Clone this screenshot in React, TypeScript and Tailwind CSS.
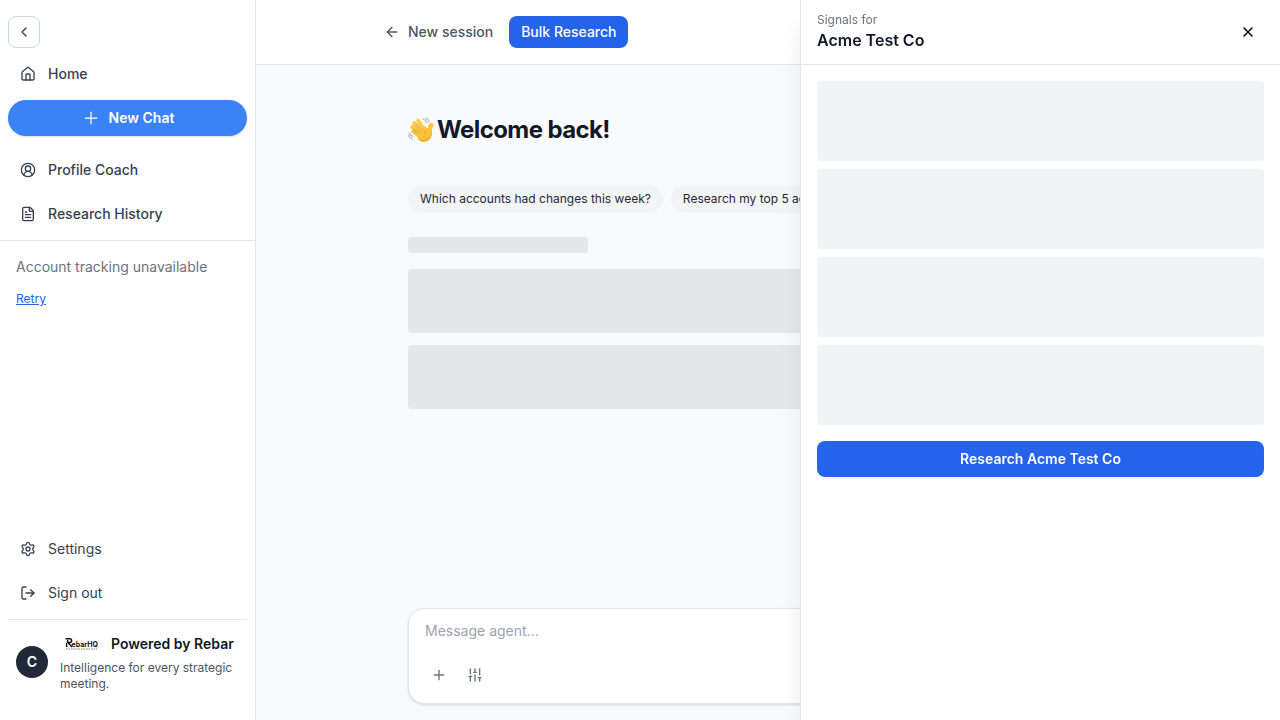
import type { ReactNode } from 'react';
import {
  ArrowLeft,
  ChevronLeft,
  CircleUserRound,
  FileText,
  House,
  LogOut,
  Plus,
  Settings,
  SlidersVertical,
  X,
} from 'lucide-react';

function WavingHand() {
  return (
    <svg viewBox="0 0 52 52" className="h-[26px] w-[26px] shrink-0" role="img" aria-label="Waving hand">
      <defs>
        <linearGradient id="skin" x1="0" y1="0" x2="1" y2="1">
          <stop offset="0" stopColor="#ffd550" />
          <stop offset="1" stopColor="#f7b32b" />
        </linearGradient>
      </defs>
      <g fill="none" stroke="#b4b6ba" strokeWidth="2.4" strokeLinecap="round">
        <path d="M30 4c4 1 6 3 7 7M35 2c4 1 6 4 7 8" />
        <path d="M3 32c1 4 3 6 7 7M1 37c2 4 4 6 8 7" />
      </g>
      <g strokeLinecap="round" fill="none">
        <path d="M26 28 12 12" strokeWidth="7" stroke="#fcc63c" />
        <path d="M32 24 20 7" strokeWidth="7" stroke="#fdca42" />
        <path d="M22 33 8 20" strokeWidth="6.5" stroke="#fbc237" />
        <path d="M22 38 10 29" strokeWidth="6" stroke="#f9bc32" />
      </g>
      <path
        d="M15 32 34 18c2 2 4 5 5 6 1-3 1-8 4-11 2-2 8-1 8 3 0 4-4 6-3 12 1 8-1 14-8 19-7 4-14 3-19-1z"
        fill="url(#skin)"
      />
      <g fill="none" stroke="#df8f1f" strokeWidth="1.3" strokeLinecap="round">
        <path d="M17 12 29 26M12 17l13 13M11 25l11 9" />
        <path d="M39 24c-4 2-6 5-5 10" />
      </g>
      <path d="M24 46c7 4 17 2 21-5" fill="none" stroke="#e69a22" strokeWidth="1.6" strokeLinecap="round" />
    </svg>
  );
}

function RebarLogo() {
  return (
    <svg viewBox="0 0 45 16" className="h-4 w-[45px] shrink-0" role="img" aria-label="RebarHQ">
      <g fill="none" stroke="#111" strokeWidth="1.4">
        <path d="M5.5 2.7h4.2c2.6 0 2.6 3.8 0 3.8H8l4 4.5M7.6 4v3" />
        <path d="M6.6 7v4" />
      </g>
      <text x="11.5" y="10.6" fontFamily="Inter, sans-serif" fontSize="7" fontWeight="700" fill="#111">
        ebarHQ
      </text>
      <path d="M6 13h31" stroke="#888" strokeWidth="1" strokeDasharray="1.6 .9" />
    </svg>
  );
}

function NavItem({ icon, label, light = false }: { icon: ReactNode; label: string; light?: boolean }) {
  return (
    <a
      href="#"
      className={`flex h-11 items-center gap-3 rounded-lg px-3 text-sm text-[#374151] ${light ? 'font-normal' : 'font-medium'}`}
    >
      {icon}
      {label}
    </a>
  );
}

function Sidebar() {
  return (
    <aside className="flex w-64 shrink-0 flex-col border-r border-gray-200 bg-white">
      <div className="px-2 pt-4 pb-1">
        <button
          type="button"
          aria-label="Collapse sidebar"
          className="mb-1 flex size-8 items-center justify-center rounded-lg border border-gray-300 text-[#374151]"
        >
          <ChevronLeft size={16} />
        </button>
        <nav>
          <NavItem icon={<House size={16} />} label="Home" />
          <button
            type="button"
            className="mt-1 mb-3 flex h-9 w-full items-center justify-center gap-2 rounded-full bg-[#3b82f6] text-sm font-semibold text-white shadow-sm"
          >
            <Plus size={20} strokeWidth={1.5} />
            New Chat
          </button>
          <NavItem icon={<CircleUserRound size={16} />} label="Profile Coach" />
          <NavItem icon={<FileText size={16} />} label="Research History" />
        </nav>
      </div>
      <section className="flex-1 border-t border-gray-200 p-4">
        <p className="text-sm text-[#6b7280]">Account tracking unavailable</p>
        <button type="button" className="mt-3.5 text-xs text-[#2563eb] underline">
          Retry
        </button>
      </section>
      <div className="px-2">
        <NavItem icon={<Settings size={16} />} label="Settings" light />
        <NavItem icon={<LogOut size={16} />} label="Sign out" light />
        <footer className="mt-1 flex items-center gap-3 border-t border-gray-200 px-2 pt-3 pb-7">
          <div className="flex size-8 shrink-0 items-center justify-center rounded-full bg-[#1f2937] text-sm font-semibold text-white">
            C
          </div>
          <div className="min-w-0">
            <div className="flex h-6 items-center gap-1.5 text-sm font-semibold whitespace-nowrap text-[#111827]">
              <RebarLogo />
              Powered by Rebar
            </div>
            <p className="mt-1 text-xs text-[#4b5563]">Intelligence for every strategic meeting.</p>
          </div>
        </footer>
      </div>
    </aside>
  );
}

const prompts = ['Which accounts had changes this week?', 'Research my top 5 accounts'];

function Main() {
  return (
    <main className="flex min-w-0 flex-1 flex-col bg-[#f9fafb]">
      <header className="border-b border-gray-200 bg-white">
        <div className="mx-auto flex h-16 max-w-3xl items-center gap-4">
          <button type="button" className="flex items-center gap-2 text-sm font-medium text-[#4b5563]">
            <ArrowLeft size={16} />
            New session
          </button>
          <button type="button" className="h-8 rounded-lg bg-[#2563eb] px-3 text-sm font-medium text-white">
            Bulk Research
          </button>
        </div>
      </header>
      <div className="mx-auto flex w-full max-w-3xl flex-1 flex-col px-6 pt-12 pb-4">
        <h1 className="flex h-8 items-center gap-[3px] pt-0.5 text-2xl font-bold tracking-tight text-[#111827]">
          <WavingHand />
          Welcome back!
        </h1>
        <div className="mt-10 flex gap-2">
          {prompts.map((prompt) => (
            <button key={prompt} type="button" className="h-7 rounded-full bg-[#f3f4f6] px-3 text-xs text-[#1f2937]">
              {prompt}
            </button>
          ))}
        </div>
        <div className="mt-6 h-4 w-[180px] rounded bg-gray-200" />
        <div className="mt-4 h-16 rounded bg-gray-200" />
        <div className="mt-3 h-16 rounded bg-gray-200" />
        <form className="mt-auto rounded-2xl border border-gray-200 bg-white px-4 pt-3 pb-3.5 shadow-sm">
          <input
            type="text"
            aria-label="Message agent"
            placeholder="Message agent..."
            className="block w-full text-sm text-[#111827] outline-none placeholder:text-[#9ca3af]"
          />
          <div className="mt-5 flex gap-2 text-[#6b7280]">
            <button type="button" aria-label="Add attachment" className="flex size-7 items-center justify-center">
              <Plus size={16} />
            </button>
            <button type="button" aria-label="Options" className="flex size-7 items-center justify-center">
              <SlidersVertical size={16} />
            </button>
          </div>
        </form>
      </div>
    </main>
  );
}

function SignalsPanel() {
  return (
    <aside className="fixed inset-y-0 right-0 w-full max-w-[480px] border-l border-gray-200 bg-white shadow-xl">
      <header className="flex h-[65px] items-center justify-between border-b border-gray-200 px-4">
        <div>
          <p className="text-xs text-[#6b7280]">Signals for</p>
          <h2 className="text-base font-semibold text-[#111827]">Acme Test Co</h2>
        </div>
        <button type="button" aria-label="Close" className="flex size-8 items-center justify-center text-black">
          <X size={16} />
        </button>
      </header>
      <div className="flex flex-col gap-2 p-4">
        {[0, 1, 2, 3].map((row) => (
          <div key={row} className="h-20 rounded bg-[#f3f4f6]" />
        ))}
        <button type="button" className="mt-2 h-9 rounded-lg bg-[#2563eb] text-sm font-semibold text-white">
          Research Acme Test Co
        </button>
      </div>
    </aside>
  );
}

export default function App() {
  return (
    <div className="flex min-h-screen font-['Inter',sans-serif]">
      <Sidebar />
      <Main />
      <SignalsPanel />
    </div>
  );
}
